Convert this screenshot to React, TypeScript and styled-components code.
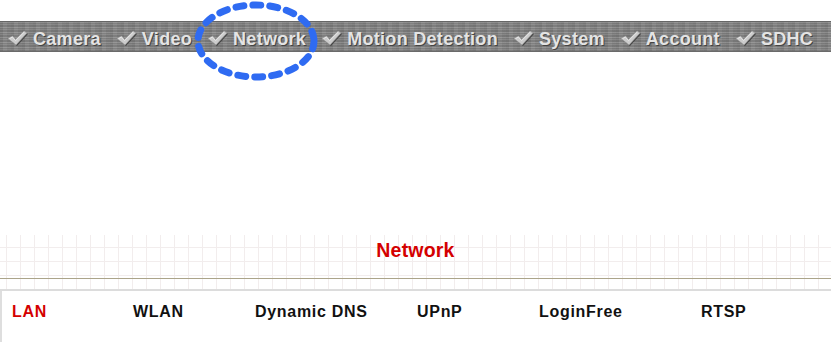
import type { FC, ReactElement } from "react";
import styled, { createGlobalStyle } from "styled-components";

const GlobalStyle = createGlobalStyle`
  html, body {
    margin: 0;
    padding: 0;
    background: #ffffff;
  }
  body {
    font-family: "Liberation Sans", Arial, sans-serif;
    width: 831px;
    height: 342px;
    overflow: hidden;
  }
`;

const menuItems = ["Camera", "Video", "Network", "Motion Detection", "System", "Account", "SDHC"];
const tabs = [
    { label: "LAN", width: 121 },
    { label: "WLAN", width: 122 },
    { label: "Dynamic DNS", width: 162 },
    { label: "UPnP", width: 122 },
    { label: "LoginFree", width: 162 },
    { label: "RTSP", width: 100 },
];

const Page = styled.div`
  position: relative;
  padding-top: 21px;
`;

const MenuBar = styled.div`
  height: 31px;
  display: flex;
  align-items: center;
  gap: 15px;
  padding: 5px 0 0 7px;
  box-sizing: border-box;
  border-top: 1px solid #666666;
  border-bottom: 1px solid #6a6a6a;
  background-color: #858585;
  background-image:
    repeating-linear-gradient(180deg, rgba(255,255,255,0.10) 0 1px, rgba(0,0,0,0.07) 1px 2px, rgba(255,255,255,0.04) 2px 3px, rgba(0,0,0,0.09) 3px 5px),
    repeating-linear-gradient(90deg, rgba(0,0,0,0.05) 0 3px, rgba(255,255,255,0.05) 3px 7px, rgba(0,0,0,0.02) 7px 11px);
`;

const MenuItem = styled.div`
  display: flex;
  align-items: center;
  gap: 5px;
  font-size: 18px;
  font-weight: bold;
  color: #e4e4e4;
  text-shadow: 1px 1px 0 #444444;
  white-space: nowrap;
  letter-spacing: 0.3px;
`;

const Check = styled.svg`
  width: 21px;
  height: 18px;
  flex: none;
  margin-top: -2px;
`;

const Highlight = styled.svg`
  position: absolute;
  left: 193px;
  top: 0;
  width: 126px;
  height: 82px;
  pointer-events: none;
`;

const GridHead = styled.div`
  margin-top: 183px;
  height: 54px;
  display: flex;
  flex-direction: column;
  background-color: #ffffff;
  background-image:
    linear-gradient(90deg, #f2eded 1px, transparent 1px),
    linear-gradient(180deg, #f2eded 1px, transparent 1px);
  background-size: 14px 14px;
  background-position: 6px 12px;
`;

const Title = styled.div`
  height: 43px;
  display: flex;
  justify-content: center;
  align-items: flex-start;
  padding-top: 4px;
  box-sizing: border-box;
  font-size: 19.5px;
  font-weight: bold;
  color: #d40000;
  letter-spacing: 0.2px;
`;

const Rule = styled.div`
  height: 1px;
  background: #aba48a;
`;

const PanelTop = styled.div`
  height: 2px;
  background: #dcdcdc;
`;

const Panel = styled.div`
  height: 52px;
  border-left: 2px solid #dedede;
  display: flex;
  align-items: flex-start;
  padding: 12px 0 0 10px;
`;

const Tab = styled.div<{ active?: boolean; w: number }>`
  width: ${({ w }) => w}px;
  flex: none;
  font-size: 16px;
  font-weight: bold;
  letter-spacing: 0.7px;
  color: ${({ active }) => (active ? "#d40000" : "#111111")};
  white-space: nowrap;
`;

const CheckIcon: FC = (): ReactElement => (
    <Check viewBox="0 0 21 18">
        <path d="M1 9.5 L5.5 7 L8.5 10.5 L17 2 L20 4 L9 16 Z"
              fill="#333333" opacity="0.75" transform="translate(1 1)" />
        <path d="M1 9.5 L5.5 7 L8.5 10.5 L17 2 L20 4 L9 16 Z"
              fill="#cccccc" stroke="#9c9c9c" strokeWidth="0.6" />
        <path d="M2.5 9.6 L5.5 8 L8.6 11.6 L17.2 3.2" fill="none" stroke="#eeeeee" strokeWidth="0.8" />
    </Check>
);

const App: FC = (): ReactElement => (
    <Page>
        <GlobalStyle />
        <MenuBar>
            { menuItems.map(item => (
                <MenuItem key={item}>
                    <CheckIcon />
                    <span>{ item }</span>
                </MenuItem>
            )) }
        </MenuBar>
        <Highlight viewBox="0 0 126 82">
            <ellipse cx="63" cy="41" rx="58" ry="36" fill="none" stroke="#2f6bf2"
                     strokeWidth="7" strokeLinecap="round" strokeDasharray="8 9" />
        </Highlight>
        <GridHead>
            <Title>Network</Title>
            <Rule />
        </GridHead>
        <PanelTop />
        <Panel>
            { tabs.map((t, i) => (
                <Tab key={t.label} w={t.width} active={i === 0}>{ t.label }</Tab>
            )) }
        </Panel>
    </Page>
);

export default App;
